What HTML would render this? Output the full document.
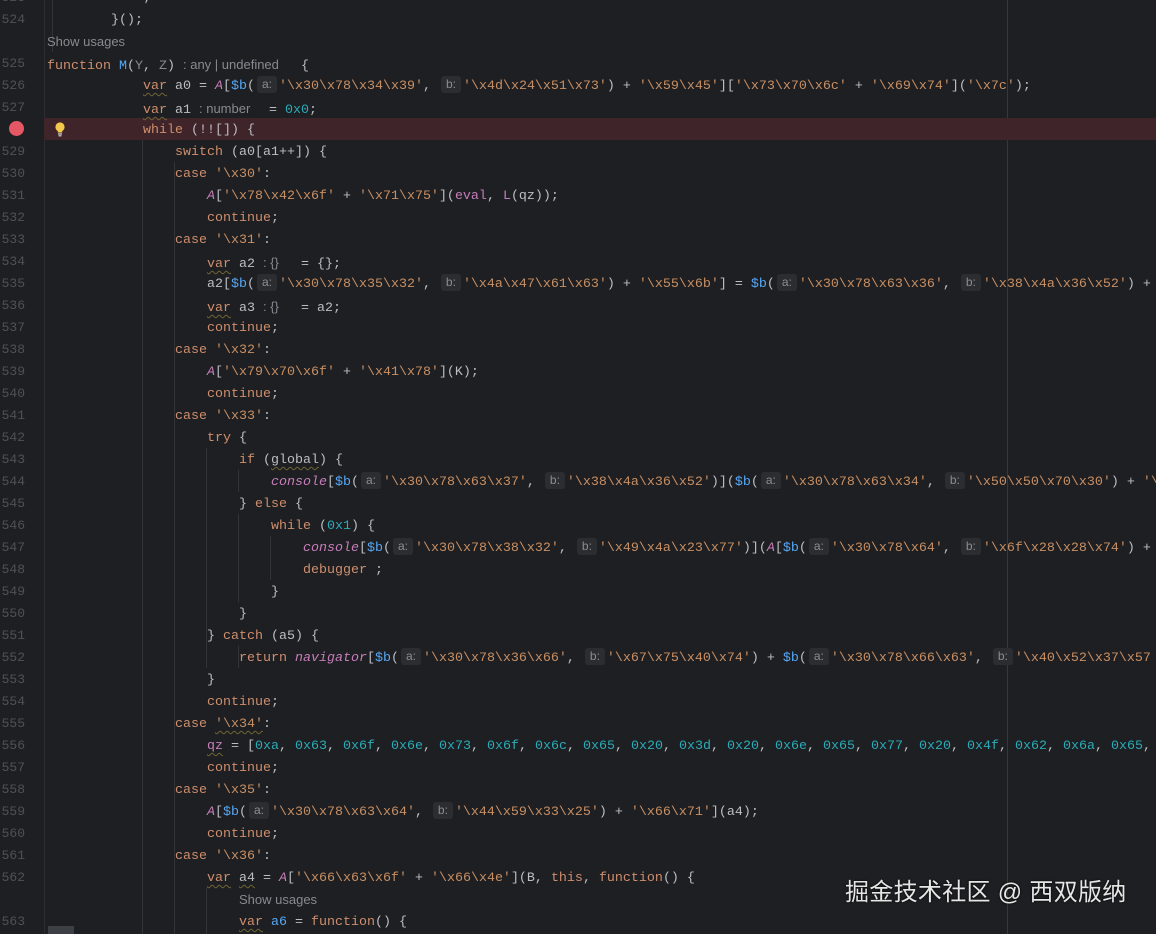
<!DOCTYPE html>
<html><head><meta charset="utf-8">
<style>
html,body{margin:0;padding:0;}
body{width:1156px;height:934px;background:#1e1f22;overflow:hidden;position:relative;font-family:"Liberation Mono",monospace;font-size:13.33px;color:#bcbec4;}
.r{position:absolute;left:47px;height:22px;line-height:22px;white-space:pre;padding-top:2px;}
.ln{position:absolute;left:0;width:25px;text-align:right;height:22px;line-height:22px;color:#4e5157;font-size:13px;padding-top:1px}
.k{color:#cf8e6d}.s{color:#c88f63}.n{color:#2aacb8}.p{color:#c77dbb;font-style:italic}.f{color:#56a8f5}.g{color:#868a91}
.w{text-decoration:underline wavy #6e6534;text-decoration-thickness:1px;text-underline-offset:3px}
.h{display:inline-block;width:20px;margin:0 2px;height:17px;line-height:17px;background:#2b2d30;border-radius:3px;color:#8b8e94;font-family:"Liberation Sans",sans-serif;font-size:12px;text-align:center;vertical-align:1px}
.t{font-family:"Liberation Sans",sans-serif;font-size:13px;color:#868a91;}
.su{position:absolute;font-family:"Liberation Sans",sans-serif;font-size:13px;color:#868a91;height:22px;line-height:22px;padding-top:1px}
.v{position:absolute;width:1px;background:#313438}
</style></head><body>
<div style="position:absolute;left:44px;top:0;width:1px;height:934px;background:#2b2d30"></div>
<div style="position:absolute;left:1007px;top:0;width:1px;height:934px;background:#36383d"></div>
<div style="position:absolute;left:44px;top:118px;width:1112px;height:22px;background:#3f2429"></div>
<div style="position:absolute;left:9px;top:121px;width:15px;height:15px;border-radius:50%;background:#e55765"></div>
<svg style="position:absolute;left:54px;top:121px" width="12" height="16" viewBox="0 0 12 16"><circle cx="6" cy="6" r="4.6" fill="#f2c94c"/><rect x="3.8" y="9" width="4.4" height="2.5" fill="#f2c94c"/><rect x="4" y="12.3" width="4" height="1.3" fill="#cfcfcf"/><rect x="4.5" y="14.2" width="3" height="1.2" fill="#cfcfcf"/></svg>
<div class="v" style="left:52px;top:0;height:52px"></div>
<div class="v" style="left:142px;top:140px;height:794px"></div>
<div class="v" style="left:174px;top:162px;height:772px"></div>
<div class="v" style="left:206px;top:448px;height:220px"></div>
<div class="v" style="left:238px;top:470px;height:22px"></div>
<div class="v" style="left:238px;top:514px;height:88px"></div>
<div class="v" style="left:238px;top:646px;height:22px"></div>
<div class="v" style="left:270px;top:536px;height:44px"></div>
<div class="v" style="left:206px;top:888px;height:46px"></div>

<div class="ln" style="top:-14px">523</div>
<div class="ln" style="top:8px">524</div>
<div class="r" style="top:-14px">            ;</div>
<div class="r" style="top:8px">        }();</div>
<div class="su" style="left:47px;top:30px">Show usages</div>
<div class="ln" style="top:52px">525</div>
<div class="r" style="top:52px"><span class="k">function</span> <span class="f">M</span>(<span class="g">Y</span>, <span class="g">Z</span>) <span class="t" style="display:inline-block;width:102px">: any | undefined</span>  {</div>
<div class="ln" style="top:74px">526</div>
<div class="r" style="top:74px">            <span class="k w">var</span> a0 = <span class="p">A</span>[<span class="f">$b</span>(<span class="h">a:</span><span class="s">'\x30\x78\x34\x39'</span>, <span class="h">b:</span><span class="s">'\x4d\x24\x51\x73'</span>) + <span class="s">'\x59\x45'</span>][<span class="s">'\x73\x70\x6c'</span> + <span class="s">'\x69\x74'</span>](<span class="s">'\x7c'</span>);</div>
<div class="ln" style="top:96px">527</div>
<div class="r" style="top:96px">            <span class="k w">var</span> a1 <span class="t" style="display:inline-block;width:62px">: number</span> = <span class="n">0x0</span>;</div>
<div class="r" style="top:118px">            <span class="k">while</span> (!![]) {</div>
<div class="ln" style="top:140px">529</div>
<div class="r" style="top:140px">                <span class="k">switch</span> (a0[a1++]) {</div>
<div class="ln" style="top:162px">530</div>
<div class="r" style="top:162px">                <span class="k">case</span> <span class="s">'\x30'</span>:</div>
<div class="ln" style="top:184px">531</div>
<div class="r" style="top:184px">                    <span class="p">A</span>[<span class="s">'\x78\x42\x6f'</span> + <span class="s">'\x71\x75'</span>](<span class="p" style="font-style:normal">eval</span>, <span class="p" style="font-style:normal">L</span>(qz));</div>
<div class="ln" style="top:206px">532</div>
<div class="r" style="top:206px">                    <span class="k">continue</span>;</div>
<div class="ln" style="top:228px">533</div>
<div class="r" style="top:228px">                <span class="k">case</span> <span class="s">'\x31'</span>:</div>
<div class="ln" style="top:250px">534</div>
<div class="r" style="top:250px">                    <span class="k w">var</span> a2 <span class="t" style="display:inline-block;width:30px">: {}</span> = {};</div>
<div class="ln" style="top:272px">535</div>
<div class="r" style="top:272px">                    a2[<span class="f">$b</span>(<span class="h">a:</span><span class="s">'\x30\x78\x35\x32'</span>, <span class="h">b:</span><span class="s">'\x4a\x47\x61\x63'</span>) + <span class="s">'\x55\x6b'</span>] = <span class="f">$b</span>(<span class="h">a:</span><span class="s">'\x30\x78\x63\x36'</span>, <span class="h">b:</span><span class="s">'\x38\x4a\x36\x52'</span>) +</div>
<div class="ln" style="top:294px">536</div>
<div class="r" style="top:294px">                    <span class="k w">var</span> a3 <span class="t" style="display:inline-block;width:30px">: {}</span> = a2;</div>
<div class="ln" style="top:316px">537</div>
<div class="r" style="top:316px">                    <span class="k">continue</span>;</div>
<div class="ln" style="top:338px">538</div>
<div class="r" style="top:338px">                <span class="k">case</span> <span class="s">'\x32'</span>:</div>
<div class="ln" style="top:360px">539</div>
<div class="r" style="top:360px">                    <span class="p">A</span>[<span class="s">'\x79\x70\x6f'</span> + <span class="s">'\x41\x78'</span>](K);</div>
<div class="ln" style="top:382px">540</div>
<div class="r" style="top:382px">                    <span class="k">continue</span>;</div>
<div class="ln" style="top:404px">541</div>
<div class="r" style="top:404px">                <span class="k">case</span> <span class="s">'\x33'</span>:</div>
<div class="ln" style="top:426px">542</div>
<div class="r" style="top:426px">                    <span class="k">try</span> {</div>
<div class="ln" style="top:448px">543</div>
<div class="r" style="top:448px">                        <span class="k">if</span> (<span class="w">global</span>) {</div>
<div class="ln" style="top:470px">544</div>
<div class="r" style="top:470px">                            <span class="p">console</span>[<span class="f">$b</span>(<span class="h">a:</span><span class="s">'\x30\x78\x63\x37'</span>, <span class="h">b:</span><span class="s">'\x38\x4a\x36\x52'</span>)](<span class="f">$b</span>(<span class="h">a:</span><span class="s">'\x30\x78\x63\x34'</span>, <span class="h">b:</span><span class="s">'\x50\x50\x70\x30'</span>) + <span class="s">'\</span></div>
<div class="ln" style="top:492px">545</div>
<div class="r" style="top:492px">                        } <span class="k">else</span> {</div>
<div class="ln" style="top:514px">546</div>
<div class="r" style="top:514px">                            <span class="k">while</span> (<span class="n">0x1</span>) {</div>
<div class="ln" style="top:536px">547</div>
<div class="r" style="top:536px">                                <span class="p">console</span>[<span class="f">$b</span>(<span class="h">a:</span><span class="s">'\x30\x78\x38\x32'</span>, <span class="h">b:</span><span class="s">'\x49\x4a\x23\x77'</span>)](<span class="p">A</span>[<span class="f">$b</span>(<span class="h">a:</span><span class="s">'\x30\x78\x64'</span>, <span class="h">b:</span><span class="s">'\x6f\x28\x28\x74'</span>) +</div>
<div class="ln" style="top:558px">548</div>
<div class="r" style="top:558px">                                <span class="k">debugger</span> ;</div>
<div class="ln" style="top:580px">549</div>
<div class="r" style="top:580px">                            }</div>
<div class="ln" style="top:602px">550</div>
<div class="r" style="top:602px">                        }</div>
<div class="ln" style="top:624px">551</div>
<div class="r" style="top:624px">                    } <span class="k">catch</span> (a5) {</div>
<div class="ln" style="top:646px">552</div>
<div class="r" style="top:646px">                        <span class="k">return</span> <span class="p">navigator</span>[<span class="f">$b</span>(<span class="h">a:</span><span class="s">'\x30\x78\x36\x66'</span>, <span class="h">b:</span><span class="s">'\x67\x75\x40\x74'</span>) + <span class="f">$b</span>(<span class="h">a:</span><span class="s">'\x30\x78\x66\x63'</span>, <span class="h">b:</span><span class="s">'\x40\x52\x37\x57</span></div>
<div class="ln" style="top:668px">553</div>
<div class="r" style="top:668px">                    }</div>
<div class="ln" style="top:690px">554</div>
<div class="r" style="top:690px">                    <span class="k">continue</span>;</div>
<div class="ln" style="top:712px">555</div>
<div class="r" style="top:712px">                <span class="k">case</span> <span class="s w">'\x34'</span>:</div>
<div class="ln" style="top:734px">556</div>
<div class="r" style="top:734px">                    <span class="p w" style="font-style:normal">qz</span> = [<span class="n">0xa</span>, <span class="n">0x63</span>, <span class="n">0x6f</span>, <span class="n">0x6e</span>, <span class="n">0x73</span>, <span class="n">0x6f</span>, <span class="n">0x6c</span>, <span class="n">0x65</span>, <span class="n">0x20</span>, <span class="n">0x3d</span>, <span class="n">0x20</span>, <span class="n">0x6e</span>, <span class="n">0x65</span>, <span class="n">0x77</span>, <span class="n">0x20</span>, <span class="n">0x4f</span>, <span class="n">0x62</span>, <span class="n">0x6a</span>, <span class="n">0x65</span>,</div>
<div class="ln" style="top:756px">557</div>
<div class="r" style="top:756px">                    <span class="k">continue</span>;</div>
<div class="ln" style="top:778px">558</div>
<div class="r" style="top:778px">                <span class="k">case</span> <span class="s">'\x35'</span>:</div>
<div class="ln" style="top:800px">559</div>
<div class="r" style="top:800px">                    <span class="p">A</span>[<span class="f">$b</span>(<span class="h">a:</span><span class="s">'\x30\x78\x63\x64'</span>, <span class="h">b:</span><span class="s">'\x44\x59\x33\x25'</span>) + <span class="s">'\x66\x71'</span>](a4);</div>
<div class="ln" style="top:822px">560</div>
<div class="r" style="top:822px">                    <span class="k">continue</span>;</div>
<div class="ln" style="top:844px">561</div>
<div class="r" style="top:844px">                <span class="k">case</span> <span class="s">'\x36'</span>:</div>
<div class="ln" style="top:866px">562</div>
<div class="r" style="top:866px">                    <span class="k w">var</span> <span class="w">a4</span> = <span class="p">A</span>[<span class="s">'\x66\x63\x6f'</span> + <span class="s">'\x66\x4e'</span>](B, <span class="k">this</span>, <span class="k">function</span>() {</div>
<div class="su" style="left:239px;top:888px">Show usages</div>
<div class="ln" style="top:910px">563</div>
<div class="r" style="top:910px">                        <span class="k w">var</span> <span class="f">a6</span> = <span class="k">function</span>() {</div>
<div style="position:absolute;left:48px;top:926px;width:26px;height:8px;background:#3c3f44"></div>
<div style="position:absolute;left:845px;top:878px;font-family:'Liberation Sans','Noto Sans CJK SC',sans-serif;font-size:24px;letter-spacing:0.3px;color:#e6e6e6;text-shadow:0 0 2px #000;white-space:nowrap;line-height:30px">掘金技术社区 @ 西双版纳</div>
</body></html>
